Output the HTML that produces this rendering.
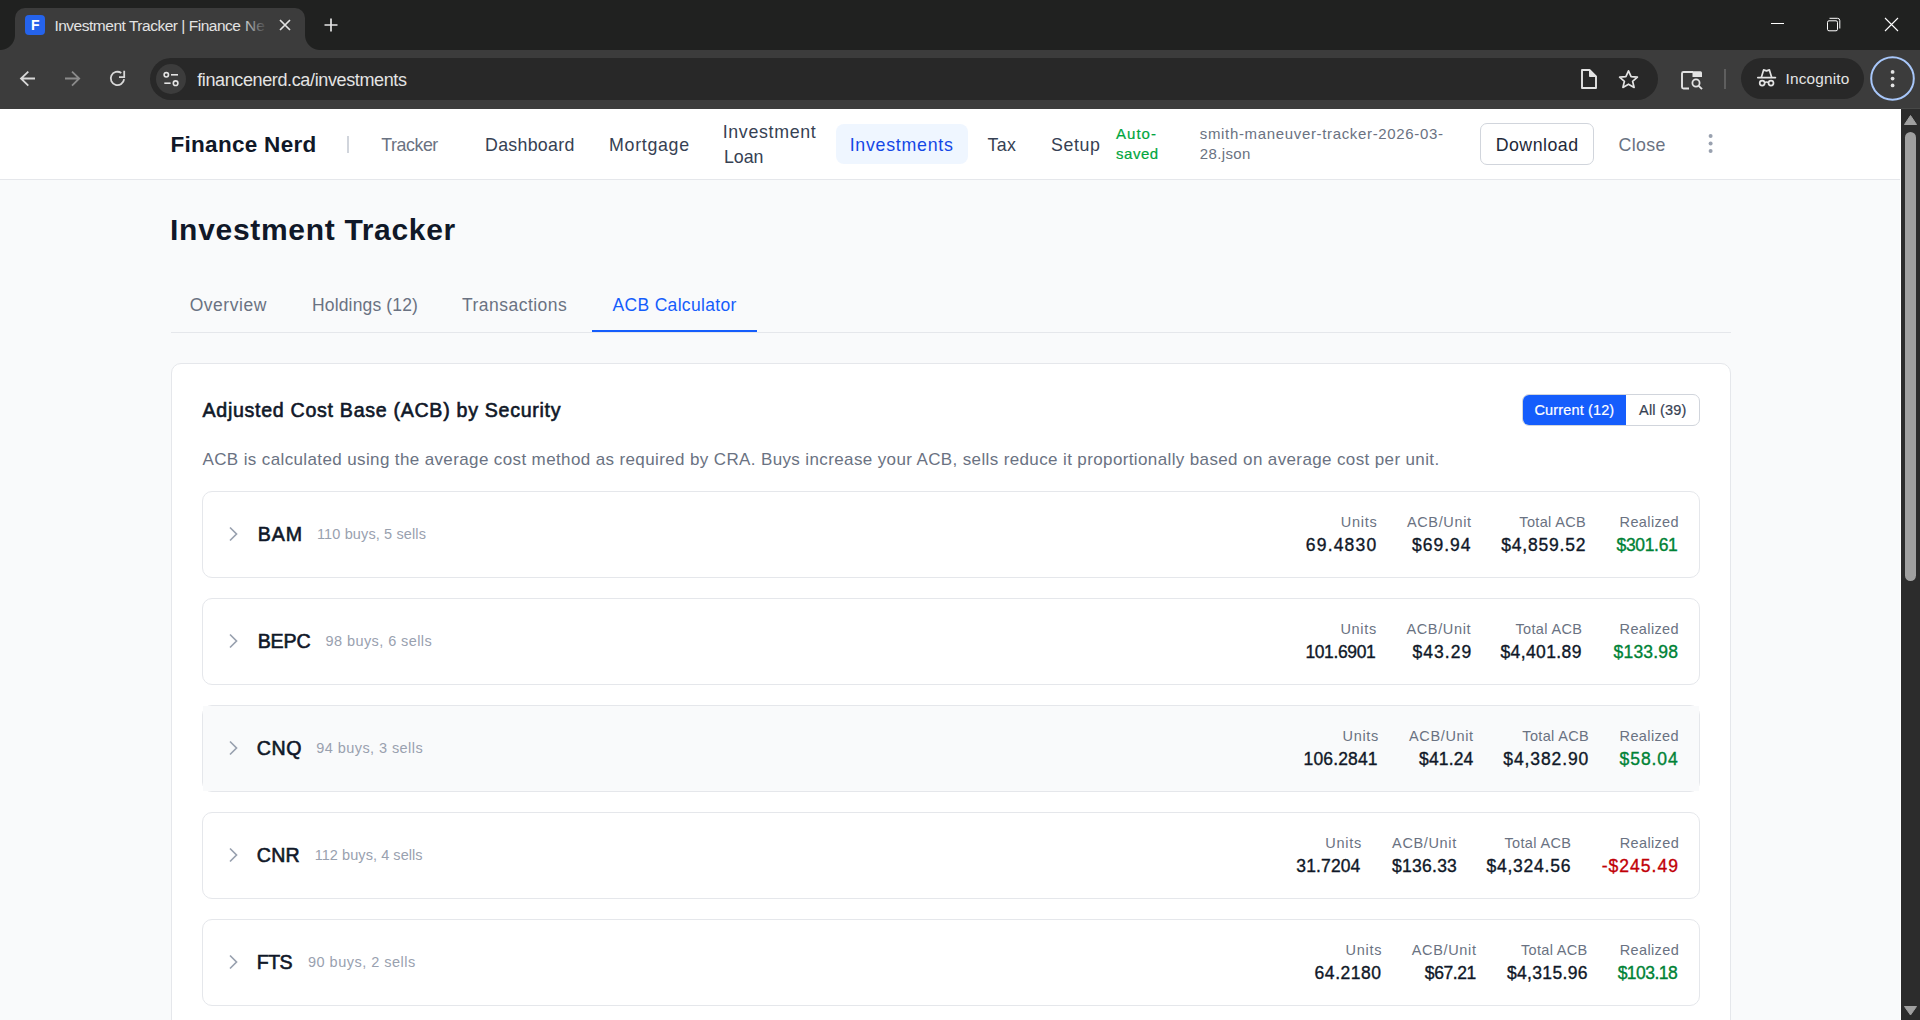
<!DOCTYPE html>
<html><head><meta charset="utf-8"><title>Investment Tracker | Finance Nerd</title>
<style>
html,body{margin:0;padding:0}
body{width:1920px;height:1020px;overflow:hidden;position:relative;background:#f9fafb;font-family:"Liberation Sans",sans-serif}
.a{position:absolute}
.t{position:absolute;white-space:pre;line-height:1;font-family:"Liberation Sans",sans-serif}
svg{position:absolute;overflow:visible}
</style></head><body>
<!-- ===== Chrome frame ===== -->
<div class="a" style="left:0;top:0;width:1920px;height:50px;background:#202120"></div>
<div class="a" style="left:15px;top:8px;width:290px;height:43px;background:#3c3c3c;border-radius:10px 10px 0 0"></div>
<div class="a" style="left:0;top:35px;width:15px;height:15px;background:radial-gradient(circle at 0 0,#202120 14.5px,#3c3c3c 15.5px)"></div>
<div class="a" style="left:305px;top:35px;width:15px;height:15px;background:radial-gradient(circle at 100% 0,#202120 14.5px,#3c3c3c 15.5px)"></div>
<!-- favicon -->
<div class="a" style="left:25px;top:15px;width:20px;height:20px;background:#2563eb;border-radius:4px"></div>
<span class="t" style="left:31px;top:18px;font-size:14px;font-weight:700;color:#fff">F</span>
<!-- tab close -->
<svg style="left:0;top:0" width="1" height="1"><path d="M280 20 L290 30 M290 20 L280 30" stroke="#e3e3e3" stroke-width="1.7" fill="none"/></svg>
<!-- new tab + -->
<svg style="left:0;top:0" width="1" height="1"><path d="M331 18.5 V31.5 M324.5 25 H337.5" stroke="#e3e3e3" stroke-width="1.7" fill="none"/></svg>
<!-- window controls -->
<svg style="left:0;top:0" width="1" height="1">
 <path d="M1771 23.5 H1784" stroke="#fff" stroke-width="1" fill="none"/>
 <rect x="1827.5" y="20.8" width="10" height="10" rx="1.5" stroke="#fff" stroke-width="1" fill="none"/>
 <path d="M1829.5 18.3 H1837.5 Q1839.8 18.3 1839.8 20.6 V28.5" stroke="#fff" stroke-width="1" fill="none"/>
 <path d="M1885 18 L1898 31 M1898 18 L1885 31" stroke="#fff" stroke-width="1.1" fill="none"/>
</svg>
<!-- ===== Toolbar ===== -->
<div class="a" style="left:0;top:50px;width:1920px;height:59px;background:#3c3c3c"></div>
<div class="a" style="left:1901px;top:108px;width:19px;height:1px;background:#474847"></div>
<svg style="left:0;top:0" width="1" height="1">
 <path d="M35 78.5 H21.5 M28.3 71.6 L21 78.5 L28.3 85.6" stroke="#d8d8d8" stroke-width="1.8" fill="none"/>
 <path d="M65 78.5 H78.5 M72 71.6 L79.2 78.5 L72 85.6" stroke="#8b8b8b" stroke-width="1.8" fill="none"/>
 <path d="M124.1 79.2 A6.7 6.7 0 1 1 121.3 73.0" stroke="#d8d8d8" stroke-width="1.8" fill="none"/>
 <path d="M124.2 70.8 V77.2 H119" stroke="#d8d8d8" stroke-width="1.8" fill="none"/>
</svg>
<!-- omnibox -->
<div class="a" style="left:150px;top:58px;width:1508px;height:42px;background:#282828;border-radius:21px"></div>
<div class="a" style="left:156px;top:64px;width:30px;height:30px;background:#3c3c3c;border-radius:50%"></div>
<svg style="left:0;top:0" width="1" height="1">
 <circle cx="166.3" cy="74.8" r="2.2" stroke="#e3e3e3" stroke-width="1.6" fill="none"/>
 <path d="M171 74.8 H178" stroke="#e3e3e3" stroke-width="1.6" fill="none"/>
 <path d="M164.3 83.2 H170.6" stroke="#e3e3e3" stroke-width="1.6" fill="none"/>
 <circle cx="175.6" cy="83.2" r="2.3" stroke="#e3e3e3" stroke-width="1.6" fill="none"/>
</svg>
<!-- doc icon -->
<svg style="left:0;top:0" width="1" height="1">
 <path d="M1582 70 H1589.5 L1596 76.5 V88 H1582 Z" stroke="#e3e3e3" stroke-width="1.9" fill="none" stroke-linejoin="round"/>
 <path d="M1589.5 70 V76.5 H1596 Z" fill="#e3e3e3" stroke="#e3e3e3" stroke-width="1" stroke-linejoin="round"/>
</svg>
<!-- star -->
<svg style="left:0;top:0" width="1" height="1">
 <path d="M1628.5 70.8 L1631.1 76.6 L1637.4 77.2 L1632.6 81.3 L1634.1 87.4 L1628.5 84.2 L1622.9 87.4 L1624.4 81.3 L1619.6 77.2 L1625.9 76.6 Z" stroke="#e3e3e3" stroke-width="1.7" fill="none" stroke-linejoin="round"/>
</svg>
<!-- tab search -->
<svg style="left:0;top:0" width="1" height="1">
 <path d="M1689 88.5 H1683.5 Q1682 88.5 1682 87 V73.5 Q1682 72 1683.5 72 H1693" stroke="#e3e3e3" stroke-width="1.9" fill="none"/>
 <path d="M1692.5 71.2 H1700.5 Q1702 71.2 1702 72.7 V77 H1692.5 Z" fill="#e3e3e3"/>
 <circle cx="1696" cy="83" r="3.6" stroke="#e3e3e3" stroke-width="1.8" fill="none"/>
 <path d="M1698.7 85.8 L1702 89.2" stroke="#e3e3e3" stroke-width="1.9" fill="none"/>
</svg>
<div class="a" style="left:1724px;top:69px;width:2px;height:20px;background:#5e5e5e"></div>
<!-- incognito -->
<div class="a" style="left:1741px;top:58px;width:123px;height:41px;background:#282828;border-radius:21px"></div>
<svg style="left:0;top:0" width="1" height="1">
 <path d="M1761.4 77.3 L1763.6 69.9 L1766.5 70.9 L1769.4 69.9 L1771.6 77.3" stroke="#e3e3e3" stroke-width="1.7" fill="none" stroke-linejoin="round"/>
 <path d="M1757.8 77.6 H1775.4" stroke="#e3e3e3" stroke-width="1.7" stroke-linecap="round"/>
 <circle cx="1762.2" cy="83.1" r="2.5" stroke="#e3e3e3" stroke-width="1.7" fill="none"/>
 <circle cx="1771" cy="83.1" r="2.5" stroke="#e3e3e3" stroke-width="1.7" fill="none"/>
 <path d="M1764.6 82.6 Q1766.6 81.2 1768.6 82.6" stroke="#e3e3e3" stroke-width="1.5" fill="none"/>
</svg>
<!-- menu -->
<svg style="left:0;top:0" width="1" height="1">
 <circle cx="1892.5" cy="78.5" r="21.3" stroke="#a8c7fa" stroke-width="2" fill="#3c3c3c"/>
 <circle cx="1892.6" cy="71.9" r="1.9" fill="#e3e3e3"/>
 <circle cx="1892.6" cy="78.6" r="1.9" fill="#e3e3e3"/>
 <circle cx="1892.6" cy="85.4" r="1.9" fill="#e3e3e3"/>
</svg>
<!-- ===== Page ===== -->
<div class="a" style="left:0;top:109px;width:1900px;height:70px;background:#fff;border-bottom:1px solid #e5e7eb"></div>
<div class="a" style="left:1900px;top:109px;width:1px;height:911px;background:#fff"></div>
<!-- scrollbar -->
<div class="a" style="left:1901px;top:109px;width:19px;height:911px;background:#2c2c2c"></div>
<svg style="left:0;top:0" width="1" height="1">
 <path d="M1910.5 115.5 L1916.5 124.5 H1904.5 Z" fill="#a0a0a0" stroke="#a0a0a0" stroke-width="1" stroke-linejoin="round"/>
 <path d="M1910.5 1015 L1916.5 1006.5 H1904.5 Z" fill="#a0a0a0" stroke="#a0a0a0" stroke-width="1" stroke-linejoin="round"/>
</svg>
<div class="a" style="left:1905px;top:132px;width:11px;height:449px;background:#a0a0a0;border-radius:5.5px"></div>
<!-- header extras -->
<div class="a" style="left:347px;top:136px;width:2px;height:17px;background:#d1d5dc"></div>
<div class="a" style="left:836px;top:124px;width:132px;height:40px;background:#eff6ff;border-radius:8px"></div>
<div class="a" style="left:1480px;top:123px;width:112px;height:40px;border:1px solid #d1d5dc;border-radius:7px;background:#fff"></div>
<svg style="left:0;top:0" width="1" height="1">
 <circle cx="1710.6" cy="136" r="2" fill="#99a1af"/>
 <circle cx="1710.6" cy="143.4" r="2" fill="#99a1af"/>
 <circle cx="1710.6" cy="150.9" r="2" fill="#99a1af"/>
</svg>
<!-- tabs -->
<div class="a" style="left:171px;top:332px;width:1560px;height:1px;background:#e5e7eb"></div>
<div class="a" style="left:592px;top:330px;width:165px;height:2px;background:#155dfc"></div>
<!-- card -->
<div class="a" style="left:171px;top:363px;width:1558px;height:700px;background:#fff;border:1px solid #e5e7eb;border-radius:10px"></div>
<div class="a" style="left:1522px;top:394px;width:176px;height:30px;border:1px solid #d1d5dc;border-radius:7px;background:#fff;overflow:hidden"><div class="a" style="left:-1px;top:-1px;width:104px;height:32px;background:#155dfc"></div></div>
<!-- rows -->
<div class="a" style="left:202px;top:491px;width:1496px;height:85px;border:1px solid #e5e7eb;border-radius:10px;background:#fff"></div>
<div class="a" style="left:202px;top:598px;width:1496px;height:85px;border:1px solid #e5e7eb;border-radius:10px;background:#fff"></div>
<div class="a" style="left:202px;top:705px;width:1496px;height:85px;border:1px solid #e5e7eb;border-radius:10px;background:#fff"><div class="a" style="left:0;top:0;width:1496px;height:85px;background:#f9fafb"></div></div>
<div class="a" style="left:202px;top:812px;width:1496px;height:85px;border:1px solid #e5e7eb;border-radius:10px;background:#fff"></div>
<div class="a" style="left:202px;top:919px;width:1496px;height:85px;border:1px solid #e5e7eb;border-radius:10px;background:#fff"></div>
<svg style="left:0;top:0" width="1" height="1">
 <path d="M230 527.5 L236.5 534 L230 540.5" stroke="#99a1af" stroke-width="1.7" fill="none"/>
 <path d="M230 634.5 L236.5 641 L230 647.5" stroke="#99a1af" stroke-width="1.7" fill="none"/>
 <path d="M230 741.5 L236.5 748 L230 754.5" stroke="#99a1af" stroke-width="1.7" fill="none"/>
 <path d="M230 848.5 L236.5 855 L230 861.5" stroke="#99a1af" stroke-width="1.7" fill="none"/>
 <path d="M230 955.5 L236.5 962 L230 968.5" stroke="#99a1af" stroke-width="1.7" fill="none"/>
</svg>
<span class=t style='left:54.40px;top:17.90px;font-size:15.5px;font-weight:400;color:#e3e3e3;letter-spacing:-0.481px;'>Investment Tracker | Finance</span>
<span class=t style='left:245.10px;top:17.90px;font-size:15.5px;font-weight:400;color:#e3e3e3;letter-spacing:0px;'>Ne</span>
<span class=t style='left:197.20px;top:70.50px;font-size:18px;font-weight:400;color:#e3e3e3;letter-spacing:-0.376px;'>financenerd.ca/investments</span>
<span class=t style='left:1785.60px;top:70.90px;font-size:15.4px;font-weight:400;color:#e3e3e3;letter-spacing:0.162px;'>Incognito</span>
<span class=t style='left:170.50px;top:133.80px;font-size:22.5px;font-weight:700;color:#101828;letter-spacing:0.291px;'>Finance Nerd</span>
<span class=t style='left:381.20px;top:137.30px;font-size:17.8px;font-weight:400;color:#6a7282;letter-spacing:-0.417px;'>Tracker</span>
<span class=t style='left:485.00px;top:137.30px;font-size:17.8px;font-weight:400;color:#364153;letter-spacing:0.287px;'>Dashboard</span>
<span class=t style='left:609.00px;top:137.30px;font-size:17.8px;font-weight:400;color:#364153;letter-spacing:0.714px;'>Mortgage</span>
<span class=t style='left:722.70px;top:123.80px;font-size:17.8px;font-weight:400;color:#364153;letter-spacing:0.678px;'>Investment</span>
<span class=t style='left:723.90px;top:148.80px;font-size:17.8px;font-weight:400;color:#364153;letter-spacing:0px;'>Loan</span>
<span class=t style='left:849.70px;top:136.80px;font-size:17.8px;font-weight:400;color:#1447e6;letter-spacing:0.73px;'>Investments</span>
<span class=t style='left:987.50px;top:136.80px;font-size:17.8px;font-weight:400;color:#364153;letter-spacing:0.4px;'>Tax</span>
<span class=t style='left:1051.00px;top:136.70px;font-size:17.8px;font-weight:400;color:#364153;letter-spacing:0.625px;'>Setup</span>
<span class=t style='left:1116.10px;top:126.10px;font-size:15px;font-weight:400;color:#00a63e;letter-spacing:1.0px;-webkit-text-stroke:0.2px currentColor;'>Auto-</span>
<span class=t style='left:1116.10px;top:145.80px;font-size:15px;font-weight:400;color:#00a63e;letter-spacing:0.5px;-webkit-text-stroke:0.2px currentColor;'>saved</span>
<span class=t style='left:1199.80px;top:126.10px;font-size:15px;font-weight:400;color:#6a7282;letter-spacing:0.66px;'>smith-maneuver-tracker-2026-03-</span>
<span class=t style='left:1199.80px;top:145.80px;font-size:15px;font-weight:400;color:#6a7282;letter-spacing:0.367px;'>28.json</span>
<span class=t style='left:1495.70px;top:136.90px;font-size:17.8px;font-weight:400;color:#1e2939;letter-spacing:0.471px;'>Download</span>
<span class=t style='left:1618.60px;top:136.90px;font-size:17.8px;font-weight:400;color:#6a7282;letter-spacing:0.35px;'>Close</span>
<span class=t style='left:170.10px;top:214.90px;font-size:30px;font-weight:700;color:#101828;letter-spacing:0.688px;'>Investment Tracker</span>
<span class=t style='left:189.70px;top:296.70px;font-size:17.5px;font-weight:400;color:#6a7282;letter-spacing:0.529px;'>Overview</span>
<span class=t style='left:312.00px;top:296.70px;font-size:17.5px;font-weight:400;color:#6a7282;letter-spacing:0.15px;'>Holdings (12)</span>
<span class=t style='left:462.00px;top:296.70px;font-size:17.5px;font-weight:400;color:#6a7282;letter-spacing:0.473px;'>Transactions</span>
<span class=t style='left:612.50px;top:296.70px;font-size:17.5px;font-weight:400;color:#155dfc;letter-spacing:0.323px;'>ACB Calculator</span>
<span class=t style='left:202.50px;top:400.70px;font-size:19.6px;font-weight:400;color:#101828;letter-spacing:0.709px;-webkit-text-stroke:0.6px currentColor;'>Adjusted Cost Base (ACB) by Security</span>
<span class=t style='left:202.50px;top:450.80px;font-size:17px;font-weight:400;color:#6a7282;letter-spacing:0.375px;'>ACB is calculated using the average cost method as required by CRA. Buys increase your ACB, sells reduce it proportionally based on average cost per unit.</span>
<span class=t style='left:1534.50px;top:402.70px;font-size:14.5px;font-weight:400;color:#ffffff;letter-spacing:0.136px;-webkit-text-stroke:0.2px currentColor;'>Current (12)</span>
<span class=t style='left:1639.00px;top:402.70px;font-size:14.5px;font-weight:400;color:#364153;letter-spacing:0.214px;-webkit-text-stroke:0.2px currentColor;'>All (39)</span>
<span class=t style='left:257.75px;top:525.00px;font-size:19.6px;font-weight:400;color:#101828;letter-spacing:0.875px;-webkit-text-stroke:0.6px currentColor;'>BAM</span>
<span class=t style='left:317.00px;top:526.80px;font-size:14.5px;font-weight:400;color:#99a1af;letter-spacing:0.125px;'>110 buys, 5 sells</span>
<span class=t style='left:1340.80px;top:514.80px;font-size:14.5px;font-weight:400;color:#6a7282;letter-spacing:0.7px;'>Units</span>
<span class=t style='left:1305.80px;top:536.50px;font-size:17.5px;font-weight:400;color:#101828;letter-spacing:1.183px;-webkit-text-stroke:0.35px currentColor;'>69.4830</span>
<span class=t style='left:1406.90px;top:514.80px;font-size:14.5px;font-weight:400;color:#6a7282;letter-spacing:0.643px;'>ACB/Unit</span>
<span class=t style='left:1411.90px;top:536.50px;font-size:17.5px;font-weight:400;color:#101828;letter-spacing:1.02px;-webkit-text-stroke:0.35px currentColor;'>$69.94</span>
<span class=t style='left:1519.30px;top:514.80px;font-size:14.5px;font-weight:400;color:#6a7282;letter-spacing:0.338px;'>Total ACB</span>
<span class=t style='left:1501.30px;top:536.50px;font-size:17.5px;font-weight:400;color:#101828;letter-spacing:0.787px;-webkit-text-stroke:0.35px currentColor;'>$4,859.52</span>
<span class=t style='left:1619.60px;top:514.80px;font-size:14.5px;font-weight:400;color:#6a7282;letter-spacing:0.371px;'>Realized</span>
<span class=t style='left:1616.60px;top:536.50px;font-size:17.5px;font-weight:400;color:#008236;letter-spacing:-0.35px;-webkit-text-stroke:0.35px currentColor;'>$301.61</span>
<span class=t style='left:257.70px;top:632.00px;font-size:19.6px;font-weight:400;color:#101828;letter-spacing:-0.167px;-webkit-text-stroke:0.6px currentColor;'>BEPC</span>
<span class=t style='left:325.60px;top:633.80px;font-size:14.5px;font-weight:400;color:#99a1af;letter-spacing:0.413px;'>98 buys, 6 sells</span>
<span class=t style='left:1340.40px;top:621.80px;font-size:14.5px;font-weight:400;color:#6a7282;letter-spacing:0.7px;'>Units</span>
<span class=t style='left:1305.40px;top:643.50px;font-size:17.5px;font-weight:400;color:#101828;letter-spacing:-0.371px;-webkit-text-stroke:0.35px currentColor;'>101.6901</span>
<span class=t style='left:1406.40px;top:621.80px;font-size:14.5px;font-weight:400;color:#6a7282;letter-spacing:0.643px;'>ACB/Unit</span>
<span class=t style='left:1412.40px;top:643.50px;font-size:17.5px;font-weight:400;color:#101828;letter-spacing:1.06px;-webkit-text-stroke:0.35px currentColor;'>$43.29</span>
<span class=t style='left:1515.50px;top:621.80px;font-size:14.5px;font-weight:400;color:#6a7282;letter-spacing:0.338px;'>Total ACB</span>
<span class=t style='left:1500.50px;top:643.50px;font-size:17.5px;font-weight:400;color:#101828;letter-spacing:0.387px;-webkit-text-stroke:0.35px currentColor;'>$4,401.89</span>
<span class=t style='left:1619.60px;top:621.80px;font-size:14.5px;font-weight:400;color:#6a7282;letter-spacing:0.371px;'>Realized</span>
<span class=t style='left:1613.60px;top:643.50px;font-size:17.5px;font-weight:400;color:#008236;letter-spacing:0.183px;-webkit-text-stroke:0.35px currentColor;'>$133.98</span>
<span class=t style='left:256.70px;top:739.00px;font-size:19.6px;font-weight:400;color:#101828;letter-spacing:0.65px;-webkit-text-stroke:0.6px currentColor;'>CNQ</span>
<span class=t style='left:316.30px;top:740.80px;font-size:14.5px;font-weight:400;color:#99a1af;letter-spacing:0.427px;'>94 buys, 3 sells</span>
<span class=t style='left:1342.50px;top:728.80px;font-size:14.5px;font-weight:400;color:#6a7282;letter-spacing:0.7px;'>Units</span>
<span class=t style='left:1303.50px;top:750.50px;font-size:17.5px;font-weight:400;color:#101828;letter-spacing:0.143px;-webkit-text-stroke:0.35px currentColor;'>106.2841</span>
<span class=t style='left:1409.00px;top:728.80px;font-size:14.5px;font-weight:400;color:#6a7282;letter-spacing:0.643px;'>ACB/Unit</span>
<span class=t style='left:1419.00px;top:750.50px;font-size:17.5px;font-weight:400;color:#101828;letter-spacing:0.16px;-webkit-text-stroke:0.35px currentColor;'>$41.24</span>
<span class=t style='left:1522.30px;top:728.80px;font-size:14.5px;font-weight:400;color:#6a7282;letter-spacing:0.338px;'>Total ACB</span>
<span class=t style='left:1503.30px;top:750.50px;font-size:17.5px;font-weight:400;color:#101828;letter-spacing:0.887px;-webkit-text-stroke:0.35px currentColor;'>$4,382.90</span>
<span class=t style='left:1619.60px;top:728.80px;font-size:14.5px;font-weight:400;color:#6a7282;letter-spacing:0.371px;'>Realized</span>
<span class=t style='left:1619.60px;top:750.50px;font-size:17.5px;font-weight:400;color:#008236;letter-spacing:0.92px;-webkit-text-stroke:0.35px currentColor;'>$58.04</span>
<span class=t style='left:256.70px;top:846.00px;font-size:19.6px;font-weight:400;color:#101828;letter-spacing:0.3px;-webkit-text-stroke:0.6px currentColor;'>CNR</span>
<span class=t style='left:314.70px;top:847.80px;font-size:14.5px;font-weight:400;color:#99a1af;letter-spacing:0.062px;'>112 buys, 4 sells</span>
<span class=t style='left:1325.30px;top:835.80px;font-size:14.5px;font-weight:400;color:#6a7282;letter-spacing:0.7px;'>Units</span>
<span class=t style='left:1296.30px;top:857.50px;font-size:17.5px;font-weight:400;color:#101828;letter-spacing:0.133px;-webkit-text-stroke:0.35px currentColor;'>31.7204</span>
<span class=t style='left:1392.10px;top:835.80px;font-size:14.5px;font-weight:400;color:#6a7282;letter-spacing:0.643px;'>ACB/Unit</span>
<span class=t style='left:1392.10px;top:857.50px;font-size:17.5px;font-weight:400;color:#101828;letter-spacing:0.25px;-webkit-text-stroke:0.35px currentColor;'>$136.33</span>
<span class=t style='left:1504.50px;top:835.80px;font-size:14.5px;font-weight:400;color:#6a7282;letter-spacing:0.338px;'>Total ACB</span>
<span class=t style='left:1486.50px;top:857.50px;font-size:17.5px;font-weight:400;color:#101828;letter-spacing:0.762px;-webkit-text-stroke:0.35px currentColor;'>$4,324.56</span>
<span class=t style='left:1619.70px;top:835.80px;font-size:14.5px;font-weight:400;color:#6a7282;letter-spacing:0.371px;'>Realized</span>
<span class=t style='left:1601.70px;top:857.50px;font-size:17.5px;font-weight:400;color:#c10007;letter-spacing:1.014px;-webkit-text-stroke:0.35px currentColor;'>-$245.49</span>
<span class=t style='left:256.70px;top:953.00px;font-size:19.6px;font-weight:400;color:#101828;letter-spacing:-0.5px;-webkit-text-stroke:0.6px currentColor;'>FTS</span>
<span class=t style='left:308.00px;top:954.80px;font-size:14.5px;font-weight:400;color:#99a1af;letter-spacing:0.487px;'>90 buys, 2 sells</span>
<span class=t style='left:1345.60px;top:942.80px;font-size:14.5px;font-weight:400;color:#6a7282;letter-spacing:0.7px;'>Units</span>
<span class=t style='left:1314.60px;top:964.50px;font-size:17.5px;font-weight:400;color:#101828;letter-spacing:0.533px;-webkit-text-stroke:0.35px currentColor;'>64.2180</span>
<span class=t style='left:1411.80px;top:942.80px;font-size:14.5px;font-weight:400;color:#6a7282;letter-spacing:0.643px;'>ACB/Unit</span>
<span class=t style='left:1424.80px;top:964.50px;font-size:17.5px;font-weight:400;color:#101828;letter-spacing:-0.4px;-webkit-text-stroke:0.35px currentColor;'>$67.21</span>
<span class=t style='left:1520.90px;top:942.80px;font-size:14.5px;font-weight:400;color:#6a7282;letter-spacing:0.338px;'>Total ACB</span>
<span class=t style='left:1506.90px;top:964.50px;font-size:17.5px;font-weight:400;color:#101828;letter-spacing:0.35px;-webkit-text-stroke:0.35px currentColor;'>$4,315.96</span>
<span class=t style='left:1619.70px;top:942.80px;font-size:14.5px;font-weight:400;color:#6a7282;letter-spacing:0.371px;'>Realized</span>
<span class=t style='left:1617.70px;top:964.50px;font-size:17.5px;font-weight:400;color:#008236;letter-spacing:-0.55px;-webkit-text-stroke:0.35px currentColor;'>$103.18</span>
<!-- tab title fade -->
<div class="a" style="left:242px;top:14px;width:26px;height:22px;background:linear-gradient(90deg,rgba(60,60,60,0),rgba(60,60,60,.55) 50%,#3c3c3c 100%)"></div>
<div class="a" style="left:268px;top:14px;width:8px;height:22px;background:#3c3c3c"></div>
</body></html>
